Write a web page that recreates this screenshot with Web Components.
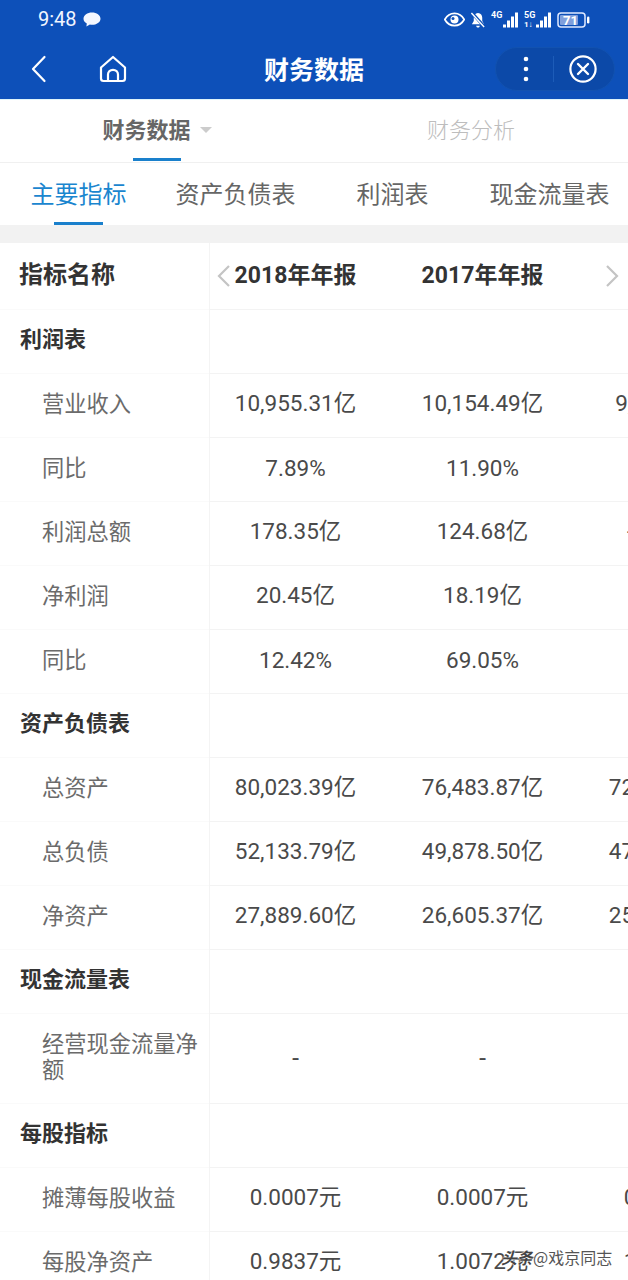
<!DOCTYPE html>
<html lang="zh">
<head>
<meta charset="utf-8">
<title>财务数据</title>
<style>
html, body { margin: 0; height: 1280px; overflow: hidden; background: #fff; }
body { font-family: Roboto, "Noto Sans CJK SC", sans-serif; }
</style>
</head>
<body>
<app-header></app-header>
<main-tabs></main-tabs>
<sub-tabs></sub-tabs>
<fin-table></fin-table>
<water-mark></water-mark>

<script>
class AppHeader extends HTMLElement {
    constructor() {
        super();
        this.attachShadow({ mode: "open" }).innerHTML = `<style>
        :host { display: block; height: 99px; background: #0d50b9; color: #fff; border-bottom: 1px solid #dff4fb; }
        .status { height: 39px; display: flex; align-items: center; padding: 0 38px 0 38px; }
        .time { font-size: 20px; line-height: 39px; color: #f2f6ff; }
        .bubble { margin-left: 6px; }
        .right { margin-left: auto; display: flex; align-items: center; gap: 5px; }
        .nav { height: 60px; display: grid; grid-template-columns: 1fr auto 1fr; align-items: center; }
        .left { display: flex; align-items: center; gap: 49px; padding: 0 0 1px 29px; }
        h1 { margin: 0 0 3px; font-size: 25px; font-weight: 700; font-family: "Noto Sans CJK SC", sans-serif; }
        .capsule { justify-self: end; margin-right: 13px; width: 120px; height: 44px; box-sizing: border-box; border-radius: 22px; background: #0c49a8; border: 1px solid #1252b0; display: flex; align-items: center; }
        .more { width: 57px; box-sizing: border-box; padding-left: 2px; display: flex; justify-content: center; }
        .line { width: 1px; height: 26px; background: #1d5cb8; }
        .close { flex: 1; padding-right: 3px; display: flex; justify-content: center; }
        svg { display: block; }
        </style>
        <div class="status">
            <span class="time">9:48</span>
            <svg class="bubble" width="18" height="15" viewBox="0 0 18 15"><path d="M9 0.5C13.6 0.5 17.5 3.2 17.5 6.7S13.6 12.8 9 12.8C8.2 12.8 7.6 12.8 6.9 12.6L3.4 14.5 3.8 11.4C1.8 10.3 0.5 8.7 0.5 6.7 0.5 3.2 4.4 0.5 9 0.5Z" fill="#f4f7ff"/></svg>
            <div class="right">
                <svg width="21" height="15" viewBox="0 0 21 15"><path d="M0.8 7.5C3 3.4 6.4 1.4 10.5 1.4S18 3.4 20.2 7.5C18 11.6 14.6 13.6 10.5 13.6S3 11.6 0.8 7.5Z" fill="none" stroke="#fff" stroke-width="1.7"/><circle cx="10.5" cy="7.5" r="4" fill="#fff"/><circle cx="9" cy="6.5" r="1.5" fill="#0d50b9"/></svg>
                <svg width="16" height="18" viewBox="0 0 17 18"><path d="M8.5 1.5C5.5 1.5 4 3.8 4 6.5V10L2 13.5H15L13 10V6.5C13 3.8 11.5 1.5 8.5 1.5Z" fill="#fff"/><path d="M6.5 15H10.5C10.2 16.4 9.4 17 8.5 17S6.8 16.4 6.5 15Z" fill="#fff"/><path d="M1.5 0.8L15.5 16.5" stroke="#0d50b9" stroke-width="3.4"/><path d="M1.5 1.5L15 16.5" stroke="#fff" stroke-width="1.5"/></svg>
                <svg width="28" height="20" viewBox="0 0 28 20"><text x="0" y="8" font-family="Roboto" font-size="9" font-weight="700" fill="#fff">4G</text><g fill="#fff"><rect x="12" y="14.5" width="3" height="3"/><rect x="16" y="10.5" width="3" height="7"/><rect x="20" y="6.5" width="3" height="11"/><rect x="24" y="2.5" width="3" height="15"/></g></svg>
                <svg width="28" height="20" viewBox="0 0 28 20"><text x="0" y="8" font-family="Roboto" font-size="9" font-weight="700" fill="#fff">5G</text><text x="0" y="17" font-family="Roboto" font-size="8" font-weight="700" fill="#fff">1↓</text><g fill="#fff"><rect x="12" y="14.5" width="3" height="3"/><rect x="16" y="10.5" width="3" height="7"/><rect x="20" y="6.5" width="3" height="11"/><rect x="24" y="2.5" width="3" height="15"/></g></svg>
                <svg width="33" height="16" viewBox="0 0 33 16"><rect x="1" y="1" width="27" height="14" rx="3" fill="none" stroke="#dfe9ff" stroke-width="1.5"/><rect x="3" y="3" width="18" height="10" rx="1" fill="#7f9fdc"/><text x="6" y="12.6" font-family="Roboto" font-size="13" font-weight="700" fill="#fff">71</text><rect x="30" y="4.5" width="2.4" height="7" rx="1.2" fill="#fff"/></svg>
            </div>
        </div>
        <div class="nav">
            <div class="left">
                <svg width="20" height="28" viewBox="0 0 20 28"><path d="M15.5 2L4 14 15.5 26" fill="none" stroke="#fff" stroke-width="2.2" stroke-linecap="round" stroke-linejoin="round"/></svg>
                <svg width="30" height="28" viewBox="0 0 30 28"><path d="M15 2L3 12.5V23.5C3 25.2 4 26 5.5 26H24.5C26 26 27 25.2 27 23.5V12.5Z" fill="none" stroke="#fff" stroke-width="2.2" stroke-linejoin="round"/><path d="M10 26V19.5C10 16.7 12.2 14.8 15 14.8S20 16.7 20 19.5V26" fill="none" stroke="#fff" stroke-width="2.2"/></svg>
            </div>
            <h1>财务数据</h1>
            <div class="capsule">
                <div class="more"><svg width="6" height="26" viewBox="0 0 6 26"><circle cx="3" cy="3" r="2.3" fill="#fff"/><circle cx="3" cy="13" r="2.3" fill="#fff"/><circle cx="3" cy="23" r="2.3" fill="#fff"/></svg></div>
                <div class="line"></div>
                <div class="close"><svg width="28" height="28" viewBox="0 0 28 28"><circle cx="14" cy="14" r="12.6" fill="none" stroke="#fff" stroke-width="2.2"/><path d="M9 9L19 19M19 9L9 19" stroke="#fff" stroke-width="2.4" stroke-linecap="round"/></svg></div>
            </div>
        </div>`;
    }
}

class MainTabs extends HTMLElement {
    constructor() {
        super();
        this.attachShadow({ mode: "open" }).innerHTML = `<style>
        :host { display: grid; grid-template-columns: 1fr 1fr; height: 62px; border-bottom: 1px solid #f0f0f0; font-family: "Noto Sans CJK SC", sans-serif; font-size: 22px; }
        div { position: relative; display: flex; align-items: center; justify-content: center; padding-bottom: 6px; }
        .on { color: #666; font-weight: 700; }
        .off { color: #bdbdbd; font-weight: 300; }
        .caret { width: 0; height: 0; margin: 3px 0 0 9px; border: 6px solid transparent; border-top: 6px solid #ccc; border-bottom: 0; }
        .bar { position: absolute; left: 133px; top: 58px; width: 48px; height: 3px; background: #1a80cc; }
        </style>
        <div class="on">财务数据<i class="caret"></i><span class="bar"></span></div>
        <div class="off">财务分析</div>`;
    }
}

class SubTabs extends HTMLElement {
    constructor() {
        super();
        this.attachShadow({ mode: "open" }).innerHTML = `<style>
        :host { display: grid; grid-template-columns: repeat(4, 157px); height: 62px; font-family: "Noto Sans CJK SC", sans-serif; font-size: 24px; color: #666; position: relative; }
        div { display: flex; align-items: center; justify-content: center; padding-bottom: 3px; }
        .on { color: #1a86cf; }
        .bar { position: absolute; left: 54px; top: 59px; width: 49px; height: 3px; background: #1a80cc; }
        </style>
        <div class="on">主要指标</div><div>资产负债表</div><div>利润表</div><div>现金流量表</div>
        <span class="bar"></span>`;
    }
}

const rows = [
    { name: "利润表", section: true },
    { name: "营业收入", v: ["10,955.31亿", "10,154.49亿", "9,411.16亿"] },
    { name: "同比", v: ["7.89%", "11.90%", "8.12%"], pct: true },
    { name: "利润总额", v: ["178.35亿", "124.68亿", "-42.61亿"] },
    { name: "净利润", v: ["20.45亿", "18.19亿", "10.76亿"] },
    { name: "同比", v: ["12.42%", "69.05%", "6.38%"], pct: true },
    { name: "资产负债表", section: true },
    { name: "总资产", v: ["80,023.39亿", "76,483.87亿", "72,517.64亿"] },
    { name: "总负债", v: ["52,133.79亿", "49,878.50亿", "47,205.18亿"] },
    { name: "净资产", v: ["27,889.60亿", "26,605.37亿", "25,312.46亿"] },
    { name: "现金流量表", section: true },
    { name: "经营现金流量净额", v: ["-", "-", "-"], tall: true },
    { name: "每股指标", section: true },
    { name: "摊薄每股收益", v: ["0.0007元", "0.0007元", "0.0004元"] },
    { name: "每股净资产", v: ["0.9837元", "1.0072元", "1.0241元"] }
];

class FinRow extends HTMLElement {
    constructor() {
        super();
        this.attachShadow({ mode: "open" }).innerHTML = `<style>
        :host { display: flex; height: 64px; box-sizing: border-box; font-family: Roboto, "Noto Sans CJK SC", sans-serif; font-size: 22.5px; color: #4a4a4a; }
        :host([tall]) { height: 90px; }
        :host([head]) { height: 67px; }
        .name { width: 209px; flex: none; box-sizing: border-box; padding: 0 8px 4px 42px; display: flex; align-items: center; font-size: 22.25px; line-height: 26px; color: #6b6b6b; border-bottom: 1px solid #fafafa; }
        :host([section]) .name, :host([head]) .name { padding-left: 20px; color: #333; font-weight: 700; }
        :host([section]) .name { font-size: 22px; padding-bottom: 3px; }
        :host([head]) .name { font-size: 24px; padding-bottom: 2px; padding-left: 19px; }
        .view { flex: 1; min-width: 0; overflow: hidden; border-left: 1px solid #f4f4f4; border-bottom: 1px solid #f3f3f3; }
        .cells { display: flex; margin-left: -8px; height: 100%; }
        ::slotted(span:not([slot])) { width: 187px; box-sizing: border-box; padding-bottom: 9px; flex: none; display: flex; align-items: center; justify-content: center; white-space: nowrap; }
        :host([pct]) ::slotted(span:not([slot])) { padding-bottom: 3px; }
        :host([head]) ::slotted(span:not([slot])) { font-size: 23px; font-weight: 700; color: #333; padding-bottom: 6px; }
        :host([tall]) ::slotted(span:not([slot])) { font-family: "DejaVu Sans", sans-serif; padding-bottom: 4px; }
        </style>
        <div class="name"><slot name="name"></slot></div>
        <div class="view"><div class="cells"><slot></slot></div></div>`;
    }
}

const chevrons = document.createElement("template");
chevrons.innerHTML = `
<svg style="left:216px" width="16" height="24" viewBox="0 0 16 24"><path d="M13 2L3 12 13 22" fill="none" stroke="#c4c4c4" stroke-width="2.2"/></svg>
<svg style="left:604px" width="16" height="24" viewBox="0 0 16 24"><path d="M3 2L13 12 3 22" fill="none" stroke="#c4c4c4" stroke-width="2.2"/></svg>`;

class FinTable extends HTMLElement {
    constructor() {
        super();
        const root = this.attachShadow({ mode: "open" });
        root.innerHTML = `<style>
        :host { display: block; position: relative; border-top: 18px solid #f2f2f2; font-family: Roboto, "Noto Sans CJK SC", sans-serif; }
        svg { position: absolute; top: 21px; }
        </style>`;
        const head = document.createElement("fin-row");
        head.setAttribute("head", "");
        head.innerHTML = `<span slot="name">指标名称</span><span>2018年年报</span><span>2017年年报</span>`;
        root.appendChild(head);
        rows.forEach(r => {
            const row = document.createElement("fin-row");
            if (r.section) row.setAttribute("section", "");
            if (r.tall) row.setAttribute("tall", "");
            if (r.pct) row.setAttribute("pct", "");
            const name = document.createElement("span");
            name.slot = "name";
            name.textContent = r.name;
            row.appendChild(name);
            (r.v || []).forEach(t => {
                const s = document.createElement("span");
                s.textContent = t;
                row.appendChild(s);
            });
            root.appendChild(row);
        });
        root.appendChild(chevrons.content.cloneNode(true));
    }
}

class WaterMark extends HTMLElement {
    constructor() {
        super();
        this.attachShadow({ mode: "open" }).innerHTML = `<style>
        :host { display: flex; align-items: center; gap: 0; position: absolute; left: 501px; top: 1245px; font-family: "Noto Sans CJK SC", sans-serif; color: #555; text-shadow: 0 0 2px #fff, 0 0 2px #fff; white-space: nowrap; }
        .logo { font-size: 16px; font-style: italic; font-weight: 700; color: #444; }
        .who { font-size: 16px; }
        </style>
        <span class="logo">头条</span><span class="who">@戏京同志</span>`;
    }
}

customElements.define("app-header", AppHeader);
customElements.define("main-tabs", MainTabs);
customElements.define("sub-tabs", SubTabs);
customElements.define("fin-row", FinRow);
customElements.define("fin-table", FinTable);
customElements.define("water-mark", WaterMark);
</script>
</body>
</html>
